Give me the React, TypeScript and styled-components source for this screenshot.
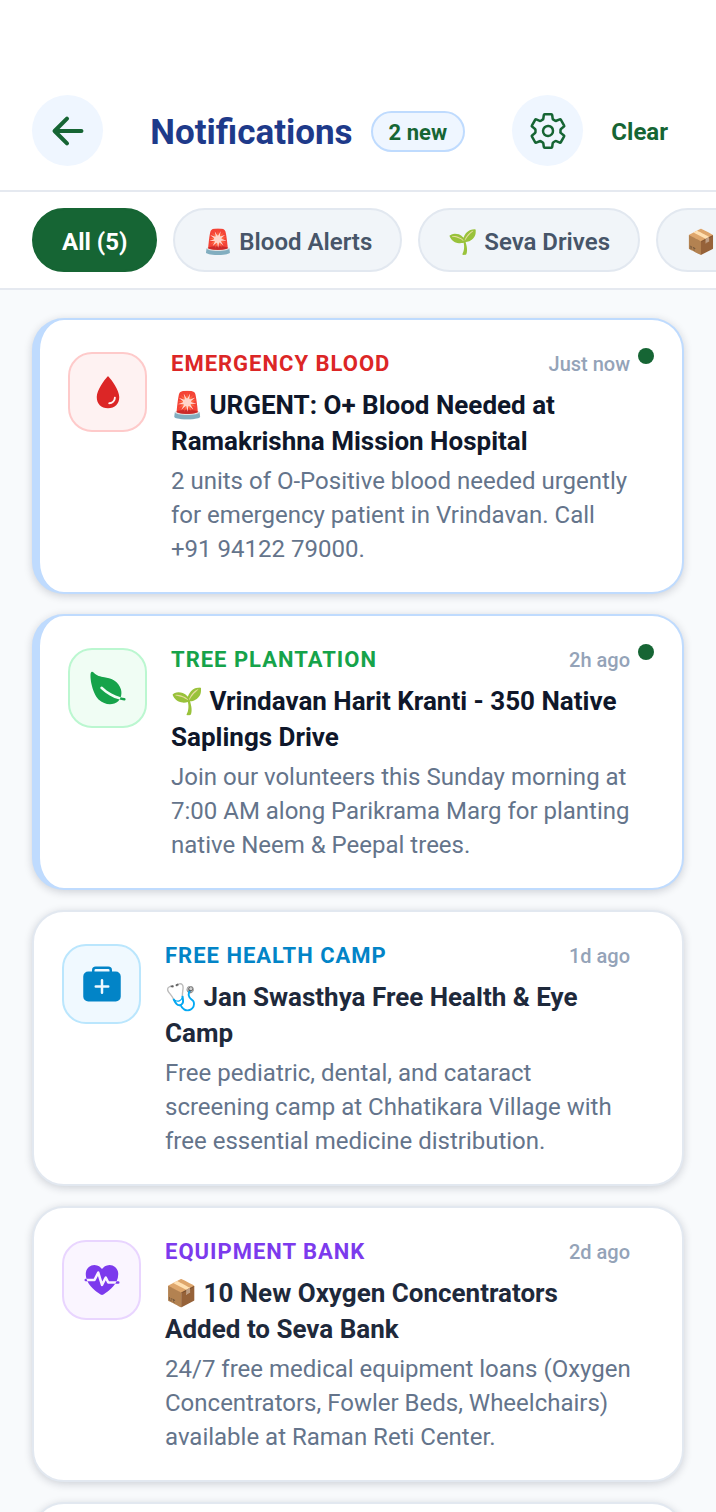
import React, { useState } from 'react';
import styled, { createGlobalStyle } from 'styled-components';
import { IoArrowBack, IoSettingsOutline, IoWater, IoLeaf, IoMedkit, IoFitness, IoCalendar } from 'react-icons/io5';

const GlobalStyle = createGlobalStyle`
  * {
    box-sizing: border-box;
  }

  body {
    margin: 0;
    background: #f8fafc;
    font-family: Roboto, "Noto Sans", sans-serif;
  }

  button {
    font-family: inherit;
    cursor: pointer;
  }
`;

const Screen = styled.div`
  display: flex;
  flex-direction: column;
  height: 100vh;
`;

const Header = styled.header`
  display: flex;
  align-items: center;
  justify-content: space-between;
  padding: 95px 32px 24px;
  background: #ffffff;
  border-bottom: 2px solid #e5e9f0;
`;

const RoundButton = styled.button<{ $iconSize: number }>`
  display: flex;
  align-items: center;
  justify-content: center;
  width: 71px;
  height: 71px;
  padding: 0;
  border: none;
  border-radius: 50%;
  background: #eff6ff;
  color: #166534;
  font-size: ${({ $iconSize }) => $iconSize}px;
`;

const TitleGroup = styled.div`
  display: flex;
  align-items: center;
  gap: 18px;
  padding-top: 2px;
`;

const PageTitle = styled.h1`
  margin: 0;
  padding-top: 2px;
  color: #1e3a8a;
  font-size: 35px;
  font-weight: 700;
  line-height: 44px;
`;

const NewBadge = styled.span`
  padding: 5px 16px 3px;
  border: 2px solid #bfdbfe;
  border-radius: 21px;
  background: #eff6ff;
  color: #166534;
  font-size: 22px;
  font-weight: 700;
  line-height: 29px;
`;

const HeaderActions = styled.div`
  display: flex;
  align-items: center;
  gap: 12px;
`;

const ClearButton = styled.button`
  padding: 9px 16px 7px;
  border: none;
  background: none;
  color: #166534;
  font-size: 24px;
  font-weight: 700;
  line-height: 32px;
`;

const Filters = styled.nav`
  display: flex;
  flex-shrink: 0;
  gap: 16px;
  padding: 16px 32px;
  background: #ffffff;
  border-bottom: 2px solid #e5e9f0;
  overflow-x: auto;
  scrollbar-width: none;
`;

const Chip = styled.button<{ $active: boolean }>`
  flex-shrink: 0;
  height: 64px;
  padding: 3px 28px 0;
  border: 2px solid ${({ $active }) => ($active ? '#166534' : '#e2e8f0')};
  border-radius: 32px;
  background: ${({ $active }) => ($active ? '#166534' : '#f1f5f9')};
  color: ${({ $active }) => ($active ? '#ffffff' : '#475569')};
  font-size: 24px;
  font-weight: ${({ $active }) => ($active ? 700 : 600)};
  white-space: nowrap;
`;

const List = styled.main`
  display: flex;
  flex: 1;
  flex-direction: column;
  gap: 20px;
  min-height: 0;
  padding: 28px 32px;
  overflow-y: auto;
  scrollbar-width: none;
`;

const Card = styled.article<{ $unread: boolean }>`
  display: flex;
  flex-shrink: 0;
  align-items: flex-start;
  padding: 28px 28px 26px;
  border: 2px solid ${({ $unread }) => ($unread ? '#bfdbfe' : '#e2e8f0')};
  border-left-width: ${({ $unread }) => ($unread ? '8px' : '2px')};
  border-radius: 32px;
  background: #ffffff;
  box-shadow: 0 2px 8px rgba(15, 23, 42, 0.18);
`;

const IconTile = styled.div<{ $color: string; $fill: string; $line: string }>`
  display: flex;
  flex-shrink: 0;
  align-items: center;
  justify-content: center;
  width: 79px;
  height: 80px;
  margin: 4px 24px 0 0;
  border: 2px solid ${({ $line }) => $line};
  border-radius: 24px;
  background: ${({ $fill }) => $fill};
  color: ${({ $color }) => $color};
  font-size: 40px;
`;

const Body = styled.div`
  flex: 1;
  min-width: 0;
`;

const MetaRow = styled.div`
  display: flex;
  align-items: center;
  justify-content: space-between;
  margin-bottom: 7px;
  line-height: 32px;
`;

const Category = styled.span<{ $color: string }>`
  color: ${({ $color }) => $color};
  font-size: 22px;
  font-weight: 700;
  letter-spacing: 1px;
`;

const Time = styled.time`
  color: #94a3b8;
  font-size: 20px;
  font-weight: 500;
`;

const Title = styled.h2<{ $unread: boolean }>`
  margin: 0 0 5px;
  color: ${({ $unread }) => ($unread ? '#0f172a' : '#1e293b')};
  font-size: 26px;
  font-weight: 700;
  line-height: 36px;
`;

const Message = styled.p`
  margin: 0 -4px 0 0;
  color: #64748b;
  font-size: 24px;
  line-height: 34px;
`;

const DotSlot = styled.div`
  flex-shrink: 0;
  width: 24px;
  padding-left: 8px;
`;

const UnreadDot = styled.div`
  width: 16px;
  height: 16px;
  border-radius: 50%;
  background: #166534;
`;

const filters = ['All (5)', '🚨 Blood Alerts', '🌱 Seva Drives', '📦 Equipment'];

const notifications = [
  {
    category: 'EMERGENCY BLOOD',
    time: 'Just now',
    title: '🚨 URGENT: O+ Blood Needed at Ramakrishna Mission Hospital',
    message: '2 units of O-Positive blood needed urgently for emergency patient in Vrindavan. Call +91 94122 79000.',
    unread: true,
    Icon: IoWater,
    color: '#dc2626',
    fill: '#fef2f2',
    line: '#fecaca',
  },
  {
    category: 'TREE PLANTATION',
    time: '2h ago',
    title: '🌱 Vrindavan Harit Kranti - 350 Native Saplings Drive',
    message: 'Join our volunteers this Sunday morning at 7:00 AM along Parikrama Marg for planting native Neem & Peepal trees.',
    unread: true,
    Icon: IoLeaf,
    color: '#16a34a',
    fill: '#f0fdf4',
    line: '#bbf7d0',
  },
  {
    category: 'FREE HEALTH CAMP',
    time: '1d ago',
    title: '🩺 Jan Swasthya Free Health & Eye Camp',
    message: 'Free pediatric, dental, and cataract screening camp at Chhatikara Village with free essential medicine distribution.',
    unread: false,
    Icon: IoMedkit,
    color: '#0284c7',
    fill: '#f0f9ff',
    line: '#bae6fd',
  },
  {
    category: 'EQUIPMENT BANK',
    time: '2d ago',
    title: '📦 10 New Oxygen Concentrators Added to Seva Bank',
    message: '24/7 free medical equipment loans (Oxygen Concentrators, Fowler Beds, Wheelchairs) available at Raman Reti Center.',
    unread: false,
    Icon: IoFitness,
    color: '#7c3aed',
    fill: '#faf5ff',
    line: '#e9d5ff',
  },
  {
    category: 'SEVA DRIVE',
    time: '3d ago',
    title: '📅 Weekend Seva Drive',
    message: 'Volunteer registration is open for this weekend.',
    unread: false,
    Icon: IoCalendar,
    color: '#d97706',
    fill: '#fffbeb',
    line: '#fde68a',
  },
];

function App() {
  const [activeFilter, setActiveFilter] = useState(filters[0]);

  return (
    <Screen>
      <GlobalStyle />
      <Header>
        <RoundButton type="button" aria-label="Back" $iconSize={44}>
          <IoArrowBack />
        </RoundButton>
        <TitleGroup>
          <PageTitle>Notifications</PageTitle>
          <NewBadge>2 new</NewBadge>
        </TitleGroup>
        <HeaderActions>
          <RoundButton type="button" aria-label="Settings" $iconSize={40}>
            <IoSettingsOutline />
          </RoundButton>
          <ClearButton type="button">Clear</ClearButton>
        </HeaderActions>
      </Header>
      <Filters>
        {filters.map((filter) => (
          <Chip key={filter} type="button" $active={filter === activeFilter} onClick={() => setActiveFilter(filter)}>
            {filter}
          </Chip>
        ))}
      </Filters>
      <List>
        {notifications.map(({ category, time, title, message, unread, Icon, color, fill, line }) => (
          <Card key={category} $unread={unread}>
            <IconTile $color={color} $fill={fill} $line={line}>
              <Icon />
            </IconTile>
            <Body>
              <MetaRow>
                <Category $color={color}>{category}</Category>
                <Time>{time}</Time>
              </MetaRow>
              <Title $unread={unread}>{title}</Title>
              <Message>{message}</Message>
            </Body>
            <DotSlot>{unread && <UnreadDot />}</DotSlot>
          </Card>
        ))}
      </List>
    </Screen>
  );
}

export default App;
